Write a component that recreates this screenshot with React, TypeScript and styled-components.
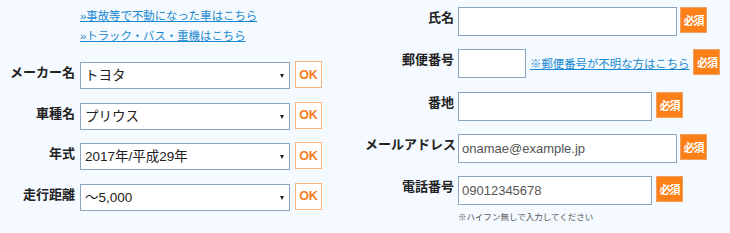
import React from "react";
import styled, { createGlobalStyle } from "styled-components";

const GlobalStyle = createGlobalStyle`
  html, body {
    margin: 0;
    padding: 0;
    background: #f4faff;
  }
  body {
    font-family: "Liberation Sans", Arial, "Noto Sans CJK JP", sans-serif;
    color: #222;
  }
`;

const Page = styled.div`
  width: 730px;
  height: 233px;
  display: flex;
  background: #f4faff;
  overflow: hidden;
`;

const LeftCol = styled.div`
  width: 365px;
  padding-top: 6px;
  box-sizing: border-box;
`;

const RightCol = styled.div`
  width: 365px;
  padding-top: 7px;
  display: flex;
  flex-direction: column;
  gap: 13.25px;
`;

const Links = styled.div`
  margin-left: 80px;
  display: flex;
  flex-direction: column;
  margin-bottom: 16px;
`;

const TextLink = styled.a`
  color: #1a88d0;
  font-size: 11.4px;
  line-height: 19px;
  text-decoration: underline;
  white-space: nowrap;
  cursor: pointer;
`;

const Rows = styled.div`
  display: flex;
  flex-direction: column;
  gap: 13.5px;
`;

const Row = styled.div`
  display: flex;
  align-items: flex-start;
`;

const Label = styled.div<{ $w: number; $gap: number }>`
  width: ${(p) => p.$w}px;
  margin-right: ${(p) => p.$gap}px;
  text-align: right;
  font-weight: bold;
  font-size: 13px;
  line-height: 16px;
  padding-top: 3px;
  white-space: nowrap;
  color: #222;
`;

const SelectWrap = styled.div`
  position: relative;
  width: 210px;
  height: 27px;
  &::after {
    content: "";
    position: absolute;
    right: 6px;
    top: 12px;
    border-left: 2.5px solid transparent;
    border-right: 2.5px solid transparent;
    border-top: 4px solid #222;
    pointer-events: none;
  }
`;

const Select = styled.select`
  appearance: none;
  -webkit-appearance: none;
  width: 100%;
  height: 100%;
  box-sizing: border-box;
  border: 1px solid #8ba4c0;
  border-radius: 0;
  background: #fff;
  padding: 0 16px 0 4px;
  font-family: inherit;
  font-size: 13.5px;
  color: #222;
  outline: none;
`;

const OkButton = styled.button`
  margin-left: 5px;
  margin-top: -1px;
  width: 27px;
  height: 27px;
  box-sizing: border-box;
  border: 1px solid #fbb57c;
  background: #fff;
  color: #f57c1c;
  font-family: inherit;
  font-weight: bold;
  font-size: 12.5px;
  padding: 0;
  cursor: pointer;
`;

const TextInput = styled.input<{ $w: number }>`
  width: ${(p) => p.$w}px;
  height: 29px;
  box-sizing: border-box;
  border: 1px solid #8ba4c0;
  border-radius: 0;
  background: #fff;
  padding: 0 3px;
  font-family: inherit;
  font-size: 13px;
  color: #555;
  outline: none;
  &::placeholder {
    color: #555;
  }
`;

const Field = styled.div`
  display: flex;
  flex-direction: column;
`;

const Note = styled.div`
  font-size: 8.5px;
  color: #555;
  margin-top: 5px;
  white-space: nowrap;
`;

const InlineLink = styled(TextLink)`
  align-self: center;
  margin-left: 4px;
  line-height: 14px;
`;

const Required = styled.span<{ $gap?: number }>`
  margin-left: ${(p) => p.$gap ?? 3}px;
  width: 27px;
  height: 26px;
  display: inline-flex;
  align-items: center;
  justify-content: center;
  background: #fd7f18;
  border: 1px solid #f0a060;
  box-sizing: border-box;
  color: #fff;
  font-weight: bold;
  font-size: 11px;
  letter-spacing: -1px;
  flex-shrink: 0;
`;

const carRows = [
  { label: "メーカー名", value: "トヨタ" },
  { label: "車種名", value: "プリウス" },
  { label: "年式", value: "2017年/平成29年" },
  { label: "走行距離", value: "～5,000" },
];

export default function App() {
  return (
    <>
      <GlobalStyle />
      <Page>
        <LeftCol>
          <Links>
            <div>
              <TextLink>»事故等で不動になった車はこちら</TextLink>
            </div>
            <div>
              <TextLink>»トラック・バス・重機はこちら</TextLink>
            </div>
          </Links>
          <Rows>
            {carRows.map((r) => (
              <Row key={r.label}>
                <Label $w={75} $gap={5}>
                  {r.label}
                </Label>
                <SelectWrap>
                  <Select defaultValue={r.value}>
                    <option value={r.value}>{r.value}</option>
                  </Select>
                </SelectWrap>
                <OkButton>OK</OkButton>
              </Row>
            ))}
          </Rows>
        </LeftCol>
        <RightCol>
          <Row>
            <Label $w={89} $gap={4}>
              氏名
            </Label>
            <TextInput $w={219} />
            <Required>必須</Required>
          </Row>
          <Row>
            <Label $w={89} $gap={4}>
              郵便番号
            </Label>
            <TextInput $w={68} />
            <InlineLink>※郵便番号が不明な方はこちら</InlineLink>
            <Required $gap={4}>必須</Required>
          </Row>
          <Row>
            <Label $w={89} $gap={4}>
              番地
            </Label>
            <TextInput $w={194} />
            <Required $gap={4}>必須</Required>
          </Row>
          <Row>
            <Label $w={89} $gap={4}>
              メールアドレス
            </Label>
            <TextInput $w={219} placeholder="onamae@example.jp" />
            <Required>必須</Required>
          </Row>
          <Row>
            <Label $w={89} $gap={4}>
              電話番号
            </Label>
            <Field>
              <TextInput $w={194} placeholder="09012345678" />
              <Note>※ハイフン無しで入力してください</Note>
            </Field>
            <Required $gap={4}>必須</Required>
          </Row>
        </RightCol>
      </Page>
    </>
  );
}
